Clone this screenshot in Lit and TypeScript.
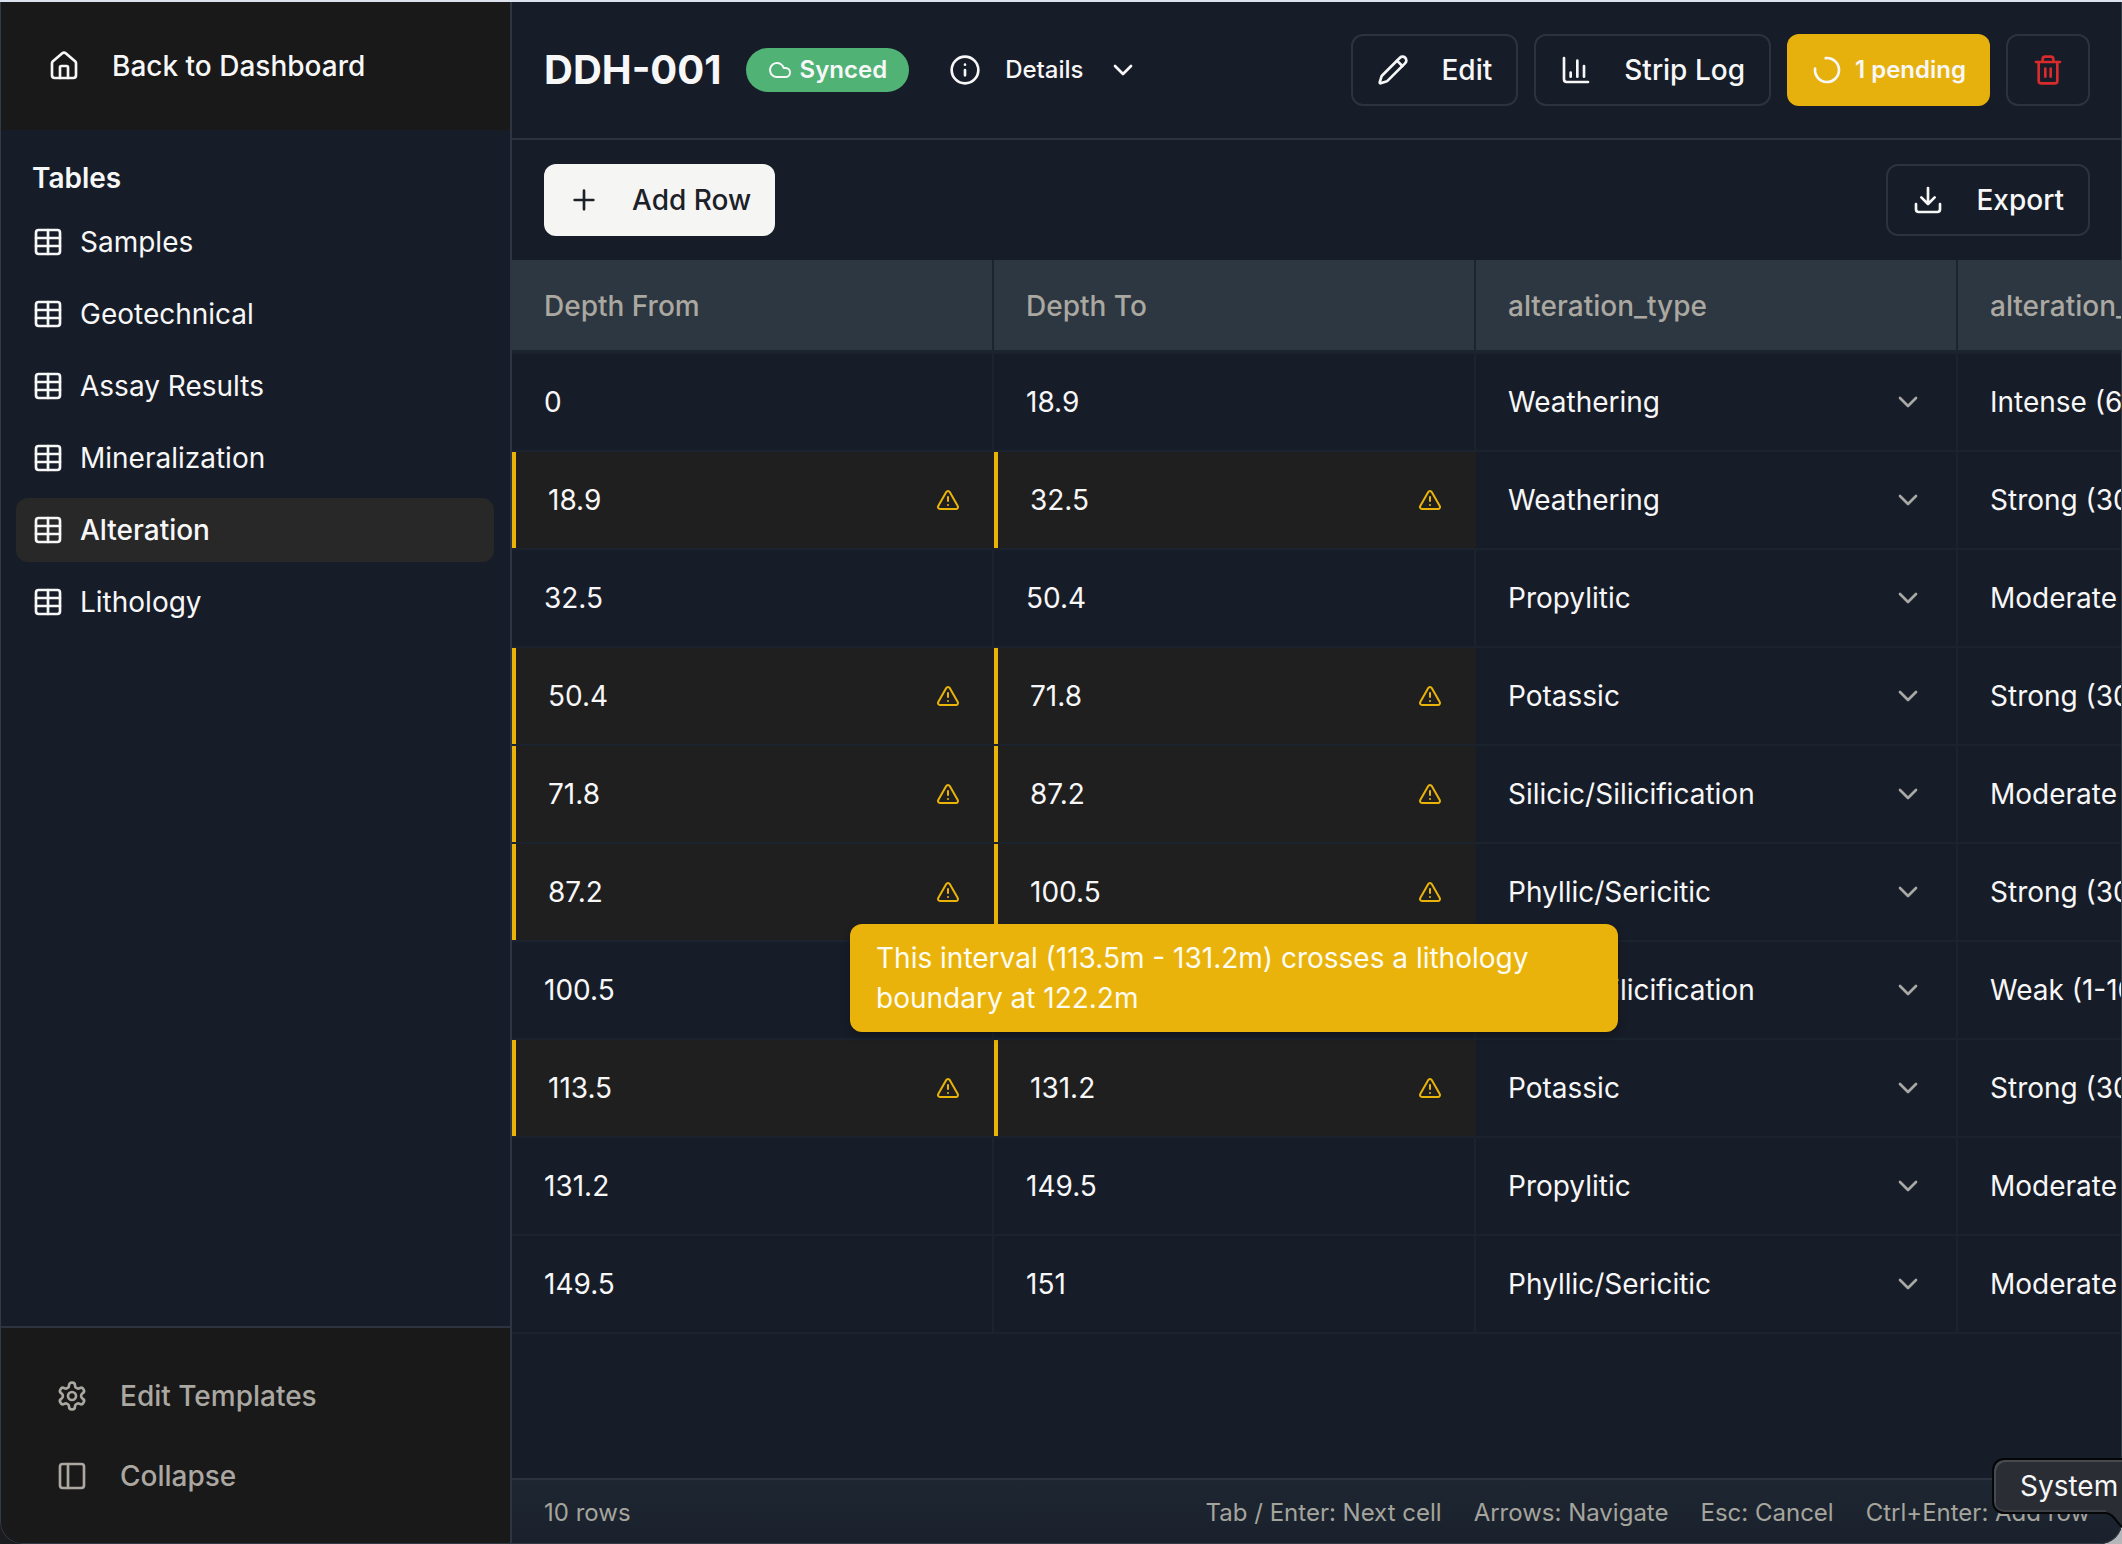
import { LitElement, html, css, svg, nothing } from "lit";
import { customElement, property, state } from "lit/decorators.js";
import { classMap } from "lit/directives/class-map.js";

const ICONS = {
  house: svg`<path d="M15 21v-8a1 1 0 0 0-1-1h-4a1 1 0 0 0-1 1v8"/><path d="M3 10a2 2 0 0 1 .709-1.528l7-5.999a2 2 0 0 1 2.582 0l7 5.999A2 2 0 0 1 21 10v9a2 2 0 0 1-2 2H5a2 2 0 0 1-2-2z"/>`,
  table: svg`<rect x="3" y="3" width="18" height="18" rx="2"/><path d="M12 3v18M3 9h18M3 15h18"/>`,
  settings: svg`<path d="M12.22 2h-.44a2 2 0 0 0-2 2v.18a2 2 0 0 1-1 1.73l-.43.25a2 2 0 0 1-2 0l-.15-.08a2 2 0 0 0-2.73.73l-.22.38a2 2 0 0 0 .73 2.73l.15.1a2 2 0 0 1 1 1.72v.51a2 2 0 0 1-1 1.74l-.15.09a2 2 0 0 0-.73 2.73l.22.38a2 2 0 0 0 2.73.73l.15-.08a2 2 0 0 1 2 0l.43.25a2 2 0 0 1 1 1.73V20a2 2 0 0 0 2 2h.44a2 2 0 0 0 2-2v-.18a2 2 0 0 1 1-1.73l.43-.25a2 2 0 0 1 2 0l.15.08a2 2 0 0 0 2.73-.73l.22-.39a2 2 0 0 0-.73-2.73l-.15-.08a2 2 0 0 1-1-1.74v-.5a2 2 0 0 1 1-1.74l.15-.09a2 2 0 0 0 .73-2.73l-.22-.38a2 2 0 0 0-2.73-.73l-.15.08a2 2 0 0 1-2 0l-.43-.25a2 2 0 0 1-1-1.73V4a2 2 0 0 0-2-2z"/><circle cx="12" cy="12" r="3"/>`,
  panel: svg`<rect x="3" y="3" width="18" height="18" rx="2"/><path d="M9 3v18"/>`,
  cloud: svg`<path d="M17.5 19H9a7 7 0 1 1 6.71-9h1.79a4.5 4.5 0 1 1 0 9Z"/>`,
  info: svg`<circle cx="12" cy="12" r="10"/><path d="M12 16v-4M12 8h.01"/>`,
  chevron: svg`<path d="m6 9 6 6 6-6"/>`,
  pencil: svg`<path d="M21.174 6.812a1 1 0 0 0-3.986-3.987L3.842 16.174a2 2 0 0 0-.5.83l-1.321 4.352a.5.5 0 0 0 .623.622l4.353-1.32a2 2 0 0 0 .83-.497z"/><path d="m15 5 4 4"/>`,
  chart: svg`<path d="M3 3v16a2 2 0 0 0 2 2h16M18 17V9M13 17V5M8 17v-3"/>`,
  loader: svg`<path d="M11 3.05A9 9 0 1 1 3.05 11"/>`,
  trash: svg`<path d="M3 6h18M19 6v14a2 2 0 0 1-2 2H7a2 2 0 0 1-2-2V6M8 6V4a2 2 0 0 1 2-2h4a2 2 0 0 1 2 2v2M10 11v6M14 11v6"/>`,
  plus: svg`<path d="M5 12h14M12 5v14"/>`,
  download: svg`<path d="M21 15v4a2 2 0 0 1-2 2H5a2 2 0 0 1-2-2v-4M7 10l5 5 5-5M12 15V3"/>`,
  warning: svg`<path d="m21.73 18-8-14a2 2 0 0 0-3.48 0l-8 14A2 2 0 0 0 4 21h16a2 2 0 0 0 1.73-3M12 9v4M12 17h.01"/>`,
};
type IconName = keyof typeof ICONS;

@customElement("ui-icon")
class UiIcon extends LitElement {
  @property() name: IconName = "table";
  static styles = css`
    :host { display: inline-flex; flex: none; width: 32px; height: 32px; }
    svg { width: 100%; height: 100%; fill: none; stroke: currentColor; stroke-width: 2; stroke-linecap: round; stroke-linejoin: round; }
  `;
  render() {
    return html`<svg viewBox="0 0 24 24" aria-hidden="true">${ICONS[this.name]}</svg>`;
  }
}

interface Interval { from: string; to: string; type: string; intensity: string; warn?: boolean }

const INTERVALS: Interval[] = [
  { from: "0", to: "18.9", type: "Weathering", intensity: "Intense (60-100%)" },
  { from: "18.9", to: "32.5", type: "Weathering", intensity: "Strong (30-60%)", warn: true },
  { from: "32.5", to: "50.4", type: "Propylitic", intensity: "Moderate (10-30%)" },
  { from: "50.4", to: "71.8", type: "Potassic", intensity: "Strong (30-60%)", warn: true },
  { from: "71.8", to: "87.2", type: "Silicic/Silicification", intensity: "Moderate (10-30%)", warn: true },
  { from: "87.2", to: "100.5", type: "Phyllic/Sericitic", intensity: "Strong (30-60%)", warn: true },
  { from: "100.5", to: "113.5", type: "Silicic/Silicification", intensity: "Weak (1-10%)" },
  { from: "113.5", to: "131.2", type: "Potassic", intensity: "Strong (30-60%)", warn: true },
  { from: "131.2", to: "149.5", type: "Propylitic", intensity: "Moderate (10-30%)" },
  { from: "149.5", to: "151", type: "Phyllic/Sericitic", intensity: "Moderate (10-30%)" },
];
const TYPES = ["Weathering", "Propylitic", "Potassic", "Silicic/Silicification", "Phyllic/Sericitic"];
const INTENSITIES = ["Weak (1-10%)", "Moderate (10-30%)", "Strong (30-60%)", "Intense (60-100%)"];
const TABLES = ["Samples", "Geotechnical", "Assay Results", "Mineralization", "Alteration", "Lithology"];
const COLUMNS = ["Depth From", "Depth To", "alteration_type", "alteration_intensity"];
const HINTS = ["Tab / Enter: Next cell", "Arrows: Navigate", "Esc: Cancel", "Ctrl+Enter: Add row"];

@customElement("app-sidebar")
class AppSidebar extends LitElement {
  @state() private active = "Alteration";
  static styles = css`
    :host { display: flex; flex-direction: column; box-sizing: border-box; border-right: 2px solid #2c3541; }
    * { box-sizing: border-box; }
    button, a { font: inherit; color: inherit; text-decoration: none; background: none; border: 0; text-align: left; cursor: pointer; }
    .top { background: #19191a; height: 128px; padding: 0 48px; }
    .back { display: flex; align-items: center; gap: 32px; height: 128px; font-weight: 500; }
    .tables { flex: 1; padding: 28px 16px; }
    h2 { margin: 0 0 12px; padding: 0 16px; font-size: 28px; line-height: 40px; font-weight: 600; }
    ul { list-style: none; margin: 0; padding: 0; display: flex; flex-direction: column; gap: 8px; }
    .item { display: flex; align-items: center; gap: 16px; width: 100%; height: 64px; padding: 0 16px; border-radius: 12px; }
    .item.active { background: #282829; font-weight: 500; }
    .bottom { display: flex; flex-direction: column; gap: 8px; background: #19191a; border-top: 2px solid #2c343f; padding: 32px 16px; color: #aaa8a0; font-weight: 500; }
    .bottom button { display: flex; align-items: center; gap: 32px; height: 72px; padding: 0 40px; }
  `;
  render() {
    return html`
      <div class="top"><a class="back" href="#dashboard"><ui-icon name="house"></ui-icon>Back to Dashboard</a></div>
      <nav class="tables" aria-label="Tables">
        <h2>Tables</h2>
        <ul>
          ${TABLES.map((t) => html`<li>
            <button class=${classMap({ item: true, active: t === this.active })} @click=${() => (this.active = t)}>
              <ui-icon name="table"></ui-icon>${t}
            </button>
          </li>`)}
        </ul>
      </nav>
      <div class="bottom">
        <button><ui-icon name="settings"></ui-icon>Edit Templates</button>
        <button><ui-icon name="panel"></ui-icon>Collapse</button>
      </div>`;
  }
}

@customElement("interval-table")
class IntervalTable extends LitElement {
  static styles = css`
    :host { display: block; position: relative; overflow: hidden; }
    * { box-sizing: border-box; }
    table { table-layout: fixed; width: 1928px; border-collapse: separate; border-spacing: 0; }
    th { height: 94px; padding: 2px 32px 0; text-align: left; font-weight: 500; color: #aaa8a0; background: #2d3742; border-right: 2px solid #1b242f; border-bottom: 4px solid #1a232e; }
    td { height: 98px; padding: 0; border-right: 2px solid #1b232e; border-bottom: 2px solid #1a232e; }
    td.warn { background: #1f1f20; border-right-color: transparent; }
    .cell { display: flex; align-items: center; justify-content: space-between; height: 96px; padding: 0 32px; }
    .warn .cell { border-left: 4px solid #eab308; }
    .warn ui-icon { width: 24px; height: 24px; color: #eab308; }
    .pick { display: grid; height: 96px; align-items: center; }
    .pick > * { grid-area: 1 / 1; }
    .pick ui-icon { justify-self: end; margin-right: 32px; color: #a8a8a5; pointer-events: none; }
    select { appearance: none; width: 100%; height: 96px; margin: 0; padding: 0 32px; border: 0; background: transparent; color: inherit; font: inherit; }
    option { background: #171d28; }
    .tip { position: absolute; left: 338px; top: 664px; width: 768px; padding: 14px 26px; border-radius: 12px; background: #eab30c; color: #fffdf2; line-height: 40px; box-shadow: 0 4px 8px rgba(0, 0, 0, 0.3); }
  `;
  private depth(value: string, warn?: boolean) {
    return html`<td class=${classMap({ warn: !!warn })}>
      <div class="cell">${value}${warn ? html`<ui-icon name="warning"></ui-icon>` : nothing}</div>
    </td>`;
  }
  private pick(label: string, value: string, options: string[]) {
    return html`<td><div class="pick">
      <select aria-label=${label}>${options.map((o) => html`<option ?selected=${o === value}>${o}</option>`)}</select>
      <ui-icon name="chevron"></ui-icon>
    </div></td>`;
  }
  render() {
    return html`
      <table>
        <thead><tr>${COLUMNS.map((c) => html`<th scope="col">${c}</th>`)}</tr></thead>
        <tbody>
          ${INTERVALS.map((r) => html`<tr>
            ${this.depth(r.from, r.warn)}${this.depth(r.to, r.warn)}
            ${this.pick("alteration_type", r.type, TYPES)}
            ${this.pick("alteration_intensity", r.intensity, INTENSITIES)}
          </tr>`)}
        </tbody>
      </table>
      <div class="tip" role="tooltip">This interval (113.5m - 131.2m) crosses a lithology boundary at 122.2m</div>`;
  }
}

@customElement("app-root")
class AppRoot extends LitElement {
  static styles = css`
    :host { display: block; position: relative; height: 100vh; overflow: hidden; background: linear-gradient(90deg, #1c1c1f 50%, #b4b6ba 50%); color: #f7f7f8; font-family: Inter, "Liberation Sans", sans-serif; font-size: 28px; line-height: 40px; }
    * { box-sizing: border-box; }
    .window { position: relative; display: grid; grid-template-columns: 512px minmax(0, 1fr); height: 100%; border-top: 2px solid #dce3ee; border-radius: 0 0 22px 22px; overflow: hidden; background: #171d28; }
    .window::after { content: ""; position: absolute; inset: 0; border: 1px solid #323a45; border-top: 0; border-radius: 0 0 22px 22px; pointer-events: none; }
    .main { display: flex; flex-direction: column; min-width: 0; }
    .bar { display: flex; align-items: center; justify-content: space-between; padding: 0 32px; }
    .header { height: 138px; padding-bottom: 32px; padding-top: 32px; border-bottom: 2px solid #2b333e; }
    .tools { height: 120px; }
    .group { display: flex; align-items: center; gap: 16px; }
    h1 { margin: 0 8px 0 0; font-size: 40px; line-height: 48px; font-weight: 700; }
    .badge { display: flex; align-items: center; gap: 8px; height: 44px; padding: 0 22px; border-radius: 22px; background: #50b375; font-size: 24px; font-weight: 600; }
    .badge ui-icon { width: 24px; height: 24px; }
    button { display: flex; align-items: center; gap: 32px; height: 72px; padding: 0 24px; border: 2px solid #2b333e; border-radius: 12px; background: transparent; color: inherit; font: inherit; font-weight: 500; cursor: pointer; }
    button.details { gap: 24px; border-color: transparent; padding: 0 22px; font-size: 24px; }
    button.pending { gap: 12px; border: 0; background: #e7b10d; font-size: 24px; font-weight: 600; }
    button.delete { color: #d92b2b; }
    button.add { border: 0; background: #f5f5f4; color: #1c2128; }
    .header { align-items: flex-start; }
    interval-table { flex: 1; }
    .status { height: 66px; padding-top: 2px; border-top: 2px solid #2b333e; background: linear-gradient(#1d2631, #1a212d); color: #a5a49d; font-size: 24px; }
    .hints { display: flex; gap: 32px; }
    .system { position: absolute; right: 0; bottom: 30px; width: 130px; height: 56px; padding: 4px 0 0 26px; border: 2px solid #050607; border-right: 0; border-radius: 12px 0 0 12px; background: #2a2e34; box-shadow: inset 2px 2px 0 #46494e, inset 0 -2px 0 #3c4045; line-height: 44px; }
    .tail { position: absolute; right: 0; bottom: 14px; width: 16px; height: 20px; }
  `;
  render() {
    return html`
      <div class="window">
        <app-sidebar></app-sidebar>
        <main class="main">
          <header class="bar header">
            <div class="group">
              <h1>DDH-001</h1>
              <span class="badge"><ui-icon name="cloud"></ui-icon>Synced</span>
              <button class="details"><ui-icon name="info"></ui-icon>Details<ui-icon name="chevron"></ui-icon></button>
            </div>
            <div class="group">
              <button><ui-icon name="pencil"></ui-icon>Edit</button>
              <button><ui-icon name="chart"></ui-icon>Strip Log</button>
              <button class="pending"><ui-icon name="loader"></ui-icon>1 pending</button>
              <button class="delete" aria-label="Delete"><ui-icon name="trash"></ui-icon></button>
            </div>
          </header>
          <div class="bar tools">
            <button class="add"><ui-icon name="plus"></ui-icon>Add Row</button>
            <button><ui-icon name="download"></ui-icon>Export</button>
          </div>
          <interval-table></interval-table>
          <footer class="bar status">
            <span>${INTERVALS.length} rows</span>
            <div class="hints">${HINTS.map((h) => html`<span>${h}</span>`)}</div>
          </footer>
        </main>
      </div>
      <div class="system" role="tooltip">System</div>
      <svg class="tail" viewBox="0 0 16 20" aria-hidden="true"><path d="M0 0H16V17C11 13 8 4 0 3Z" fill="#2a2e34"/><path d="M0 3C8 4 10 12 16 17" fill="none" stroke="#050607" stroke-width="2"/></svg>`;
  }
}
